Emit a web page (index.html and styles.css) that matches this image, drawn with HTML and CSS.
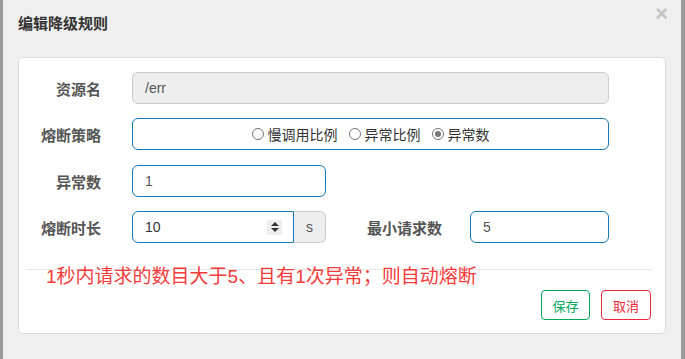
FILE: index.html
```html
<!DOCTYPE html>
<html lang="zh-CN">
<head>
    <meta charset="UTF-8">
    <meta name="viewport" content="width=device-width, initial-scale=1.0">
    <title>编辑降级规则</title>
    <link rel="stylesheet" href="styles.css">
</head>
<body>

    <div class="page">
        <div class="edge edge-left"></div>

        <!-- Modal -->
        <div class="modal">
            <div class="modal-header">
                <h4 class="modal-title">编辑降级规则</h4>
                <span class="close">&times;</span>
            </div>

            <div class="card">
                <form class="rule-form">
                    <div class="form-row">
                        <label class="form-label">资源名</label>
                        <div class="field field-readonly field-wide">/err</div>
                    </div>

                    <div class="form-row">
                        <label class="form-label">熔断策略</label>
                        <div class="field field-focus field-wide radio-group">
                            <span class="radio-item"><span class="radio"></span>慢调用比例</span>
                            <span class="radio-item"><span class="radio"></span>异常比例</span>
                            <span class="radio-item"><span class="radio checked"></span>异常数</span>
                        </div>
                    </div>

                    <div class="form-row row-gap">
                        <label class="form-label">异常数</label>
                        <div class="field field-focus field-short">1</div>
                    </div>

                    <div class="form-row">
                        <label class="form-label">熔断时长</label>
                        <div class="input-group">
                            <div class="field field-focus group-input">
                                <span>10</span>
                                <span class="spinner">
                                    <span class="tri-up"></span>
                                    <span class="tri-down"></span>
                                </span>
                            </div>
                            <div class="addon">s</div>
                        </div>
                        <label class="form-label label-second">最小请求数</label>
                        <div class="field field-focus field-min">5</div>
                    </div>
                </form>

                <div class="card-footer">
                    <p class="tip">1秒内请求的数目大于5、且有1次异常；则自动熔断</p>
                    <div class="actions">
                        <button class="btn btn-save">保存</button>
                        <button class="btn btn-cancel">取消</button>
                    </div>
                </div>
            </div>
        </div>

        <div class="edge edge-right"></div>
    </div>

</body>
</html>
```

FILE: styles.css
```css
/* Reset */
* {
    margin: 0;
    padding: 0;
    box-sizing: border-box;
    font-family: "Liberation Sans", "Noto Sans CJK SC", sans-serif;
}

body {
    background: #efefef;
    width: 685px;
    height: 359px;
    overflow: hidden;
}

.page {
    display: flex;
    height: 359px;
}

/* Page edges behind the modal */
.edge {
    background: #9a9a9a;
}

.edge-left {
    width: 3px;
}

.edge-right {
    width: 4px;
}

/* Modal */
.modal {
    flex: 1;
    background: #efefef;
    padding: 0 15px;
}

.modal-header {
    height: 57px;
    display: flex;
    justify-content: space-between;
    align-items: flex-start;
    padding-top: 14px;
}

.modal-title {
    font-size: 15px;
    font-weight: 700;
    line-height: 20px;
    color: #333;
}

.close {
    margin-top: -13px;
    margin-right: -2px;
    font-size: 22px;
    font-weight: 700;
    color: #c4c4c4;
}

/* Card */
.card {
    background: #fff;
    border: 1px solid #dcdcdc;
    border-radius: 5px;
    padding: 14px 0 13px;
}

.rule-form {
    display: flex;
    flex-direction: column;
    gap: 14px;
}

.form-row {
    display: flex;
    align-items: center;
    height: 32px;
}

.row-gap {
    margin-top: 1px;
}

.form-label {
    width: 82px;
    margin-right: 31px;
    text-align: right;
    font-size: 15px;
    font-weight: 700;
    color: #555;
}

.label-second {
    width: 116px;
    margin-right: 28px;
}

/* Fields */
.field {
    height: 32px;
    border: 1px solid #ccc;
    border-radius: 6px;
    padding: 0 12px;
    display: flex;
    align-items: center;
    font-size: 14px;
    color: #555;
}

.field-readonly {
    background: #eee;
}

.field-focus {
    border-color: #1479b8;
}

.field-wide {
    width: 477px;
}

.field-short {
    width: 194px;
}

.field-min {
    width: 139px;
}

/* Radios */
.radio-group {
    justify-content: center;
    gap: 11px;
    color: #333;
}

.radio-item {
    display: flex;
    align-items: center;
    gap: 4px;
}

.radio {
    width: 12px;
    height: 12px;
    border: 1px solid #767676;
    border-radius: 50%;
    background: #fff;
    display: flex;
    align-items: center;
    justify-content: center;
}

.radio.checked::after {
    content: "";
    width: 6px;
    height: 6px;
    border-radius: 50%;
    background: #767676;
}

/* Input group */
.input-group {
    display: flex;
    width: 194px;
}

.group-input {
    width: 162px;
    border-radius: 6px 0 0 6px;
    color: #333;
}

.spinner {
    margin-left: auto;
    margin-right: -1px;
    width: 15px;
    height: 15px;
    background: #eee;
    display: flex;
    flex-direction: column;
    align-items: center;
    justify-content: center;
    gap: 2px;
}

.tri-up {
    border-left: 4px solid transparent;
    border-right: 4px solid transparent;
    border-bottom: 4px solid #333;
}

.tri-down {
    border-left: 4px solid transparent;
    border-right: 4px solid transparent;
    border-top: 4px solid #333;
}

.addon {
    width: 32px;
    height: 32px;
    background: #eee;
    border: 1px solid #ccc;
    border-left: none;
    border-radius: 0 6px 6px 0;
    display: flex;
    align-items: center;
    justify-content: center;
    font-size: 14px;
    color: #555;
}

/* Footer */
.card-footer {
    margin: 26px 14px 0 7px;
    border-top: 1px solid #e5e5e5;
}

.tip {
    margin-top: -5px;
    padding-left: 20px;
    font-size: 19px;
    line-height: 24px;
    color: #f53b3b;
}

.actions {
    display: flex;
    justify-content: flex-end;
    gap: 11px;
    margin-top: 1px;
}

.btn {
    height: 30px;
    width: 50px;
    background: #fff;
    border: 1px solid;
    border-radius: 4px;
    font-size: 13px;
    font-family: "Noto Sans CJK SC", sans-serif;
    cursor: pointer;
}

.btn-save {
    width: 49px;
    border-color: #00a65a;
    color: #00a65a;
}

.btn-cancel {
    border-color: #e8273b;
    color: #e8273b;
}
```
